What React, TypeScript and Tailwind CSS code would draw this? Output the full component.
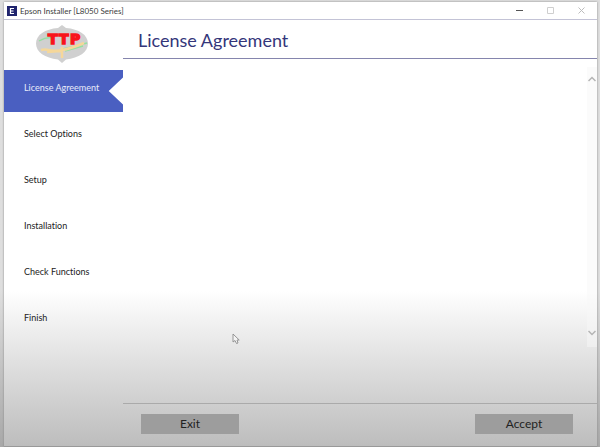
import clsx from 'clsx';

const steps = ['License Agreement', 'Select Options', 'Setup', 'Installation', 'Check Functions', 'Finish'];

function BrandLogo() {
  return (
    <svg viewBox="0 0 54 40" className="h-10 w-[54px]" role="img" aria-label="TTP">
      <path
        d="M27 0 L31 3 C44 4 53 10 53 18.500 C53 27 44 33 31 34.500 L27 38 L23 34.500 C10 33 1 27 1 18.500 C1 10 10 4 23 3 Z"
        fill="#d0d0d0"
      />
      <path d="M4 16 C9 13 14 12 20 13 M28 24 L52 18 M30 26 L48 21" fill="none" stroke="#93e0a0" strokeWidth="1.400" />
      <path
        d="M6 25 C13 23 18 28 27 25 C34 24 42 21 49 18 M27 22 V33 M12 27 L26 26"
        fill="none"
        stroke="#f5d79a"
        strokeWidth="2.500"
      />
      <g
        fill="#f8141a"
        stroke="#f8141a"
        strokeWidth="1.500"
        fontFamily="DejaVu Sans, sans-serif"
        fontSize="14"
        fontWeight="700"
      >
        <text y="19">
          <tspan x="13">T</tspan>
          <tspan x="24">T</tspan>
          <tspan x="35">P</tspan>
        </text>
      </g>
    </svg>
  );
}

function TitleBar() {
  return (
    <header className="flex h-[18px] items-center border-b border-[#c3c3d6] pr-3 pl-[3px]">
      <span className="flex size-2.5 items-center justify-center bg-[#20246e]">
        <svg viewBox="0 0 10 10" className="size-2.5" aria-hidden="true">
          <path d="M7 2.500 H3.500 V7.500 H7 M3.500 5 H6.500" fill="none" stroke="#fff" strokeWidth="1.200" />
        </svg>
      </span>
      <h1 className="ml-[3px] text-[8px] leading-4 text-[#3c3c3c]">Epson Installer [L8050 Series]</h1>
      <div className="ml-auto flex items-center gap-6">
        <button type="button" aria-label="Minimize" className="text-[#555]">
          <svg viewBox="0 0 7 7" className="size-[7px]" fill="none" stroke="currentColor">
            <path d="M0 3.500 H7" />
          </svg>
        </button>
        <button type="button" aria-label="Maximize" className="text-[#cfcfcf]">
          <svg viewBox="0 0 7 7" className="size-[7px]" fill="none" stroke="currentColor">
            <path d="M.5 .5 H6.500 V6.500 H.5 Z" />
          </svg>
        </button>
        <button type="button" aria-label="Close" className="text-[#bdbdbd]">
          <svg viewBox="0 0 7 7" className="size-[7px]" fill="none" stroke="currentColor">
            <path d="M.5 .5 L6.500 6.500 M6.500 .5 L.5 6.500" />
          </svg>
        </button>
      </div>
    </header>
  );
}

function Sidebar() {
  return (
    <aside className="w-[119px] shrink-0">
      <div className="flex h-[50px] items-center justify-center pr-1">
        <BrandLogo />
      </div>
      <nav aria-label="Installation steps">
        <ol className="flex flex-col gap-1">
          {steps.map((step, index) => (
            <li
              key={step}
              aria-current={index === 0 ? 'step' : undefined}
              className={clsx(
                'h-[42px] pt-2.5 pl-5 text-[9px] leading-4 whitespace-nowrap',
                index === 0
                  ? 'bg-[#4a5fc1] text-[#e8ebfa] [clip-path:polygon(0_0,100%_0,100%_18%,88%_50%,100%_82%,100%_100%,0_100%)]'
                  : 'text-[#222]',
              )}
            >
              {step}
            </li>
          ))}
        </ol>
      </nav>
    </aside>
  );
}

function ScrollBar() {
  return (
    <div className="flex w-2.5 flex-col items-center justify-between bg-[#f8f8f8]/50 pt-2 pb-2.5 text-[#b4b4b4]">
      <button type="button" aria-label="Scroll up">
        <svg viewBox="0 0 8 8" className="size-2" fill="none" stroke="currentColor" strokeWidth="1.500">
          <path d="M.5 6 L4 2.500 L7.500 6" />
        </svg>
      </button>
      <button type="button" aria-label="Scroll down">
        <svg viewBox="0 0 8 8" className="size-2" fill="none" stroke="currentColor" strokeWidth="1.500">
          <path d="M.5 2 L4 5.500 L7.500 2" />
        </svg>
      </button>
    </div>
  );
}

function ActionButton({ label }: { label: string }) {
  return (
    <button type="button" className="h-5 w-[98px] bg-[#9d9d9d] text-xs leading-5 text-[#222]">
      {label}
    </button>
  );
}

export default function App() {
  return (
    <div className="flex min-h-dvh flex-col bg-linear-to-b from-[#dedede] from-65% to-[#a8a8a8] pt-0.5 pr-[3px] pl-1 font-['Lato','Noto_Sans',sans-serif] [font-variant-ligatures:none]">
      <div className="flex grow flex-col border-b border-[#999] bg-linear-to-b from-white from-65% to-[#bdbdbd] shadow-[0_0_2px_#888]">
        <TitleBar />
        <div className="flex grow">
          <Sidebar />
          <main className="flex grow flex-col">
            <h2 className="border-b border-[#8585ad] pt-2 pb-1.5 pl-[15px] text-lg leading-6 text-[#34367a]">
              License Agreement
            </h2>
            <section aria-label="License text" className="mt-2 mb-14 flex grow justify-end">
              <ScrollBar />
            </section>
            <footer className="flex justify-between border-t border-[#aaa] pt-2.5 pr-6 pb-3 pl-[18px]">
              <ActionButton label="Exit" />
              <ActionButton label="Accept" />
            </footer>
          </main>
        </div>
      </div>
      <svg viewBox="0 0 8 12" className="pointer-events-none absolute top-[333px] left-[232px] h-3 w-2" aria-hidden="true">
        <path d="M1 1 V9 L3 7.500 L4.500 10.500 L6 10 L5 7 H7.200 Z" fill="#f4f4f4" stroke="#8c8c8c" strokeWidth=".9" />
      </svg>
    </div>
  );
}
